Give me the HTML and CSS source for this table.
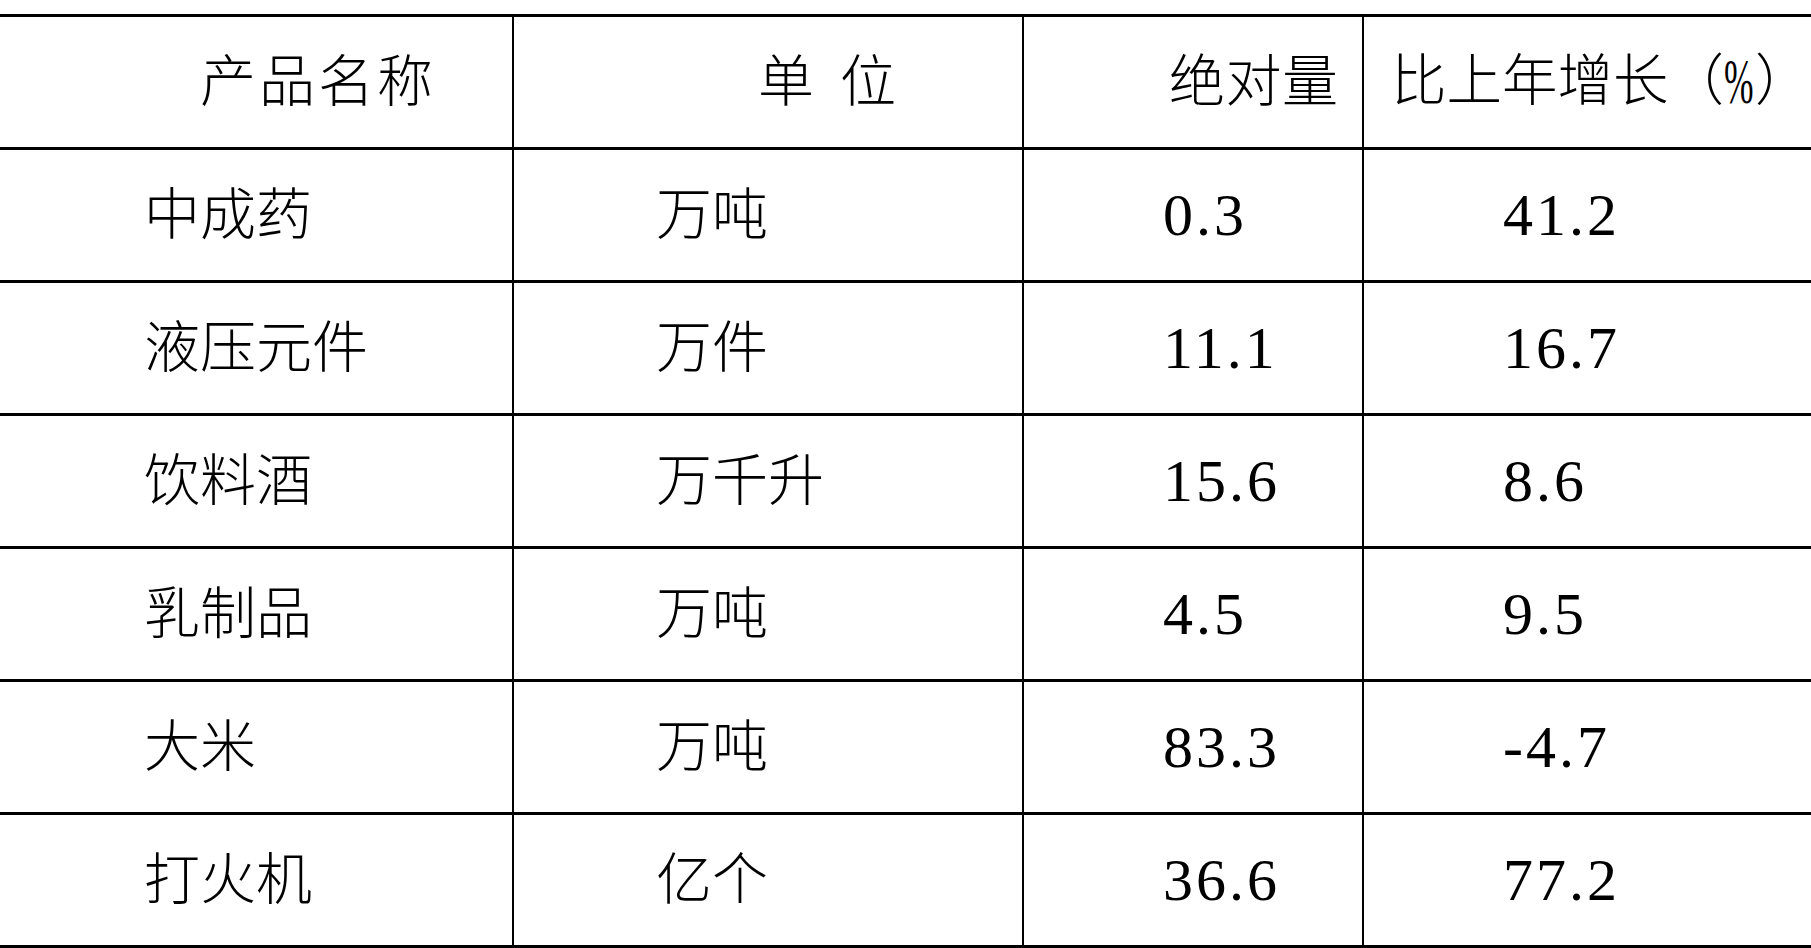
FILE: index.html
```html
<!DOCTYPE html>
<html lang="zh-CN">
<head>
<meta charset="utf-8">
<title>产品产量</title>
<link rel="stylesheet" href="styles.css">
</head>
<body>
<div class="sheet">
  <div class="grid">
    <div class="cell head c1">产品名称</div>
    <div class="cell head c2">单 位</div>
    <div class="cell head c3">绝对量</div>
    <div class="cell head c4">比上年增长（<span class="pct">%</span>）</div>

    <div class="cell c1">中成药</div>
    <div class="cell c2">万吨</div>
    <div class="cell c3 num">0.3</div>
    <div class="cell c4 num">41.2</div>

    <div class="cell c1">液压元件</div>
    <div class="cell c2">万件</div>
    <div class="cell c3 num">11.1</div>
    <div class="cell c4 num">16.7</div>

    <div class="cell c1">饮料酒</div>
    <div class="cell c2">万千升</div>
    <div class="cell c3 num">15.6</div>
    <div class="cell c4 num">8.6</div>

    <div class="cell c1">乳制品</div>
    <div class="cell c2">万吨</div>
    <div class="cell c3 num">4.5</div>
    <div class="cell c4 num">9.5</div>

    <div class="cell c1">大米</div>
    <div class="cell c2">万吨</div>
    <div class="cell c3 num">83.3</div>
    <div class="cell c4 num">-4.7</div>

    <div class="cell c1">打火机</div>
    <div class="cell c2">亿个</div>
    <div class="cell c3 num">36.6</div>
    <div class="cell c4 num">77.2</div>
  </div>
</div>
</body>
</html>
```

FILE: styles.css
```css
html, body {
  margin: 0;
  padding: 0;
  background: #fff;
  overflow: hidden;
}

.sheet {
  width: 1811px;
  height: 948px;
  padding-top: 14px;
  box-sizing: border-box;
  overflow: hidden;
}

.grid {
  display: grid;
  grid-template-columns: 514px 510px 340px 1fr;
  border-top: 3px solid #000;
  font-family: "Liberation Serif", "Noto Sans CJK SC", serif;
  font-weight: 300;
  color: #000;
}

.cell {
  box-sizing: border-box;
  height: 133px;
  display: flex;
  align-items: center;
  border-bottom: 3px solid #000;
  font-size: 56px;
  line-height: 1;
  white-space: nowrap;
}

.c1, .c2, .c3 {
  border-right: 2px solid #000;
}

.c1 { padding-left: 144px; }
.c2 { padding-left: 142px; }
.c3 { padding-left: 139px; }
.c4 { padding-left: 139px; }

.head.c1 { padding-left: 200px; letter-spacing: 3px; }
.head.c2 { padding-left: 244px; word-spacing: 12px; }
.head.c3 { padding-left: 145px; letter-spacing: 0.5px; }
.head.c4 { padding-left: 27px; font-size: 55.5px; }

.pct {
  display: inline-block;
  width: 31px;
  transform: scale(0.64, 1.15);
  transform-origin: left center;
}

.num {
  font-size: 60px;
  letter-spacing: 3px;
  font-weight: 400;
}
```
